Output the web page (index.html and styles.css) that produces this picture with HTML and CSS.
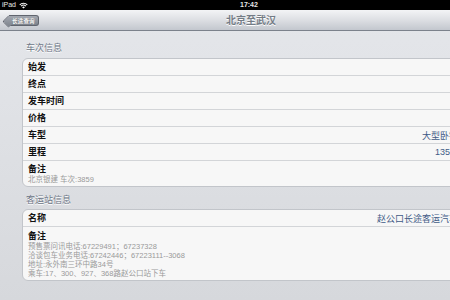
FILE: index.html
```html
<!DOCTYPE html>
<html>
<head>
<meta charset="utf-8">
<link rel="stylesheet" href="styles.css">
</head>
<body>
<div class="screen">
  <div class="status">
    <div class="st-left">
      <span class="dev">iPad</span>
      <svg class="wifi" width="9" height="7" viewBox="0 0 9 7">
        <path d="M0.3 2.4 A6 6 0 0 1 8.7 2.4 L7.9 3.2 A4.8 4.8 0 0 0 1.1 3.2 Z" fill="#fff"/>
        <path d="M1.7 3.8 A4 4 0 0 1 7.3 3.8 L6.5 4.6 A2.8 2.8 0 0 0 2.5 4.6 Z" fill="#fff"/>
        <path d="M3.1 5.2 A2 2 0 0 1 5.9 5.2 L4.5 6.6 Z" fill="#fff"/>
      </svg>
    </div>
    <div class="time">17:42</div>
  </div>
  <div class="navbar">
    <div class="back"><span>长途查询</span></div>
    <div class="title">北京至武汉</div>
  </div>
  <div class="content">
    <div class="sec-title">车次信息</div>
    <div class="table">
      <div class="row"><span class="lbl">始发</span></div>
      <div class="row"><span class="lbl">终点</span></div>
      <div class="row"><span class="lbl">发车时间</span></div>
      <div class="row"><span class="lbl">价格</span></div>
      <div class="row"><span class="lbl">车型</span><span class="val">大型卧铺车</span></div>
      <div class="row"><span class="lbl">里程</span><span class="val">1350km</span></div>
      <div class="row note-row r1">
        <div class="lbl">备注</div>
        <div class="note">北京银建 车次:3859</div>
      </div>
    </div>
    <div class="sec-title second">客运站信息</div>
    <div class="table">
      <div class="row"><span class="lbl">名称</span><span class="val">赵公口长途客运汽车站</span></div>
      <div class="row note-row r2">
        <div class="lbl">备注</div>
        <div class="note">预售票问讯电话:67229491；67237328</div>
        <div class="note">洽谈包车业务电话:67242446；67223111--3068</div>
        <div class="note">地址:永外南三环中路34号</div>
        <div class="note">乘车:17、300、927、368路赵公口站下车</div>
      </div>
    </div>
  </div>
</div>
</body>
</html>
```
FILE: styles.css
```css
* { box-sizing: border-box; }
html, body {
  margin: 0;
  padding: 0;
  width: 450px;
  height: 300px;
  overflow: hidden;
  background: #dadcdf;
}
.screen {
  width: 500px;
  height: 300px;
  font-family: "Liberation Sans", "Noto Sans CJK SC", sans-serif;
  background: linear-gradient(#e5e7eb, #d6d8dc);
}
.status {
  height: 10px;
  background: #000;
  color: #fff;
  display: flex;
  align-items: center;
  position: relative;
  font-size: 7px;
  line-height: 10px;
}
.st-left {
  display: flex;
  align-items: center;
  gap: 3px;
  padding-left: 2px;
}
.dev { color: #e8e8e8; font-size: 7px; }
.wifi { display: block; }
.time {
  position: absolute;
  left: 240px;
  top: 0;
  font-weight: bold;
  color: #e6e6e6;
  font-size: 7px;
}
.navbar {
  height: 21px;
  background: linear-gradient(#f3f4f6 0%, #dfe1e5 45%, #c3c7ce 100%);
  border-bottom: 1px solid #7c828c;
  display: flex;
  align-items: center;
  position: relative;
}
.back {
  margin-left: 9px;
  margin-top: 1px;
  height: 11px;
  padding: 0 3px 0 3px;
  background: linear-gradient(#a4a9b1, #7b818b);
  border: 1px solid #60656e;
  border-left: none;
  border-radius: 0 3px 3px 0;
  position: relative;
  display: flex;
  align-items: center;
}
.back::before {
  content: "";
  position: absolute;
  left: -5px;
  top: 0.5px;
  width: 8px;
  height: 8px;
  background: linear-gradient(135deg, #a4a9b1, #7b818b);
  border-left: 1px solid #60656e;
  border-bottom: 1px solid #60656e;
  transform: rotate(45deg);
  border-radius: 0 0 0 2px;
}
.back span {
  position: relative;
  color: #fff;
  font-size: 5.5px;
  font-weight: bold;
  letter-spacing: 0.2px;
  text-shadow: 0 -0.5px 0 #555;
}
.title {
  position: absolute;
  left: 0;
  right: 0;
  top: 0;
  text-align: center;
  line-height: 21px;
  font-size: 10px;
  font-weight: bold;
  color: #737b85;
  text-shadow: 0 1px 0 #fff;
  padding-left: 2px;
}
.content {
  padding: 11px 22px 0 22px;
}
.sec-title {
  height: 12px;
  line-height: 12px;
  padding-left: 4px;
  margin-bottom: 4px;
  font-size: 9px;
  color: #6f7887;
  text-shadow: 0 1px 0 #fff;
}
.sec-title.second {
  margin-top: 7px;
  margin-bottom: 3px;
}
.table {
  background: #f7f7f7;
  border: 1px solid #c2c5ca;
  border-radius: 6px;
  overflow: hidden;
}
.row {
  height: 17px;
  border-bottom: 1px solid #d3d5d8;
  display: flex;
  align-items: center;
  justify-content: space-between;
  padding: 0 10px 0 5px;
}
.row:last-child { border-bottom: none; }
.lbl {
  font-size: 9px;
  font-weight: bold;
  color: #111;
  line-height: 11px;
}
.val {
  font-size: 9px;
  color: #3f5a86;
}
.note-row {
  display: block;
  height: auto;
  padding-top: 3px;
}
.note-row.r1 { height: 25px; }
.note-row.r2 { height: 53px; padding-top: 4px; }
.note {
  font-size: 7.5px;
  line-height: 9px;
  color: #9a9a9a;
}
```
